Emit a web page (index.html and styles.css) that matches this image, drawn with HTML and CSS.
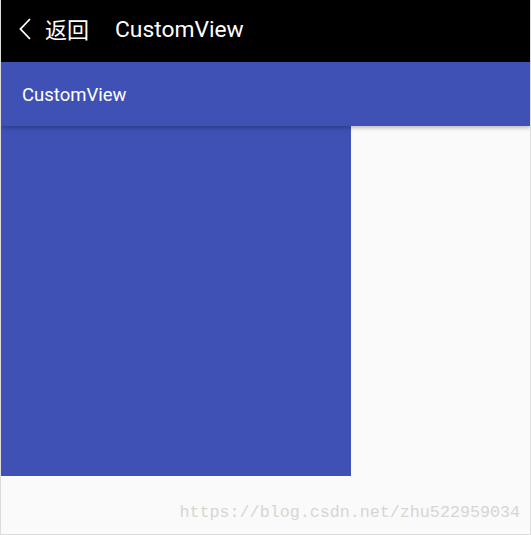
FILE: index.html
```html
<!DOCTYPE html>
<html lang="zh-CN">
<head>
  <meta charset="UTF-8">
  <meta name="viewport" content="width=device-width, initial-scale=1.0">
  <title>CustomView</title>
  <link rel="stylesheet" href="styles.css">
</head>
<body>
  <div class="screen">
    <header class="topbar">
      <svg class="back-icon" width="14" height="24" viewBox="0 0 14 24">
        <path d="M12 2 L2.5 12 L12 22" fill="none" stroke="#fff" stroke-width="1.8"/>
      </svg>
      <span class="back-text">返回</span>
      <span class="top-title">CustomView</span>
    </header>

    <div class="toolbar">CustomView</div>

    <main class="content">
      <div class="custom-view"></div>
      <div class="watermark">https://blog.csdn.net/zhu522959034</div>
    </main>
  </div>
</body>
</html>
```

FILE: styles.css
```css
html, body {
  margin: 0;
  padding: 0;
}
body {
  font-family: Roboto, "Noto Sans CJK SC", sans-serif;
  background-color: #fafafa;
}
.screen {
  width: 531px;
  height: 535px;
  box-sizing: border-box;
  border: 1px solid #dcdcdc;
  border-top: none;
  overflow: hidden;
  display: flex;
  flex-direction: column;
}
.topbar {
  height: 62px;
  background-color: #000;
  color: #fff;
  display: flex;
  align-items: center;
  padding-left: 17px;
  box-sizing: border-box;
}
.back-icon {
  margin-top: -5px;
}
.back-text {
  font-family: "Noto Sans CJK SC", sans-serif;
  font-size: 22px;
  margin-left: 13px;
  margin-top: -7px;
}
.top-title {
  font-size: 22.8px;
  margin-left: 26px;
  margin-top: -4px;
}
.toolbar {
  height: 64px;
  background-color: #3f51b5;
  color: #fff;
  font-size: 18.5px;
  display: flex;
  align-items: center;
  padding-left: 21px;
  padding-top: 2px;
  box-sizing: border-box;
  position: relative;
  z-index: 1;
  box-shadow: 0 2px 4px rgba(0, 0, 0, 0.25);
}
.content {
  flex: 1;
  display: flex;
  flex-direction: column;
}
.custom-view {
  width: 350px;
  height: 350px;
  background-color: #3f51b5;
}
.watermark {
  font-family: "Liberation Mono", monospace;
  font-size: 16.7px;
  color: #d6d6d2;
  text-align: right;
  padding-right: 10px;
  margin-top: 27px;
}
```
